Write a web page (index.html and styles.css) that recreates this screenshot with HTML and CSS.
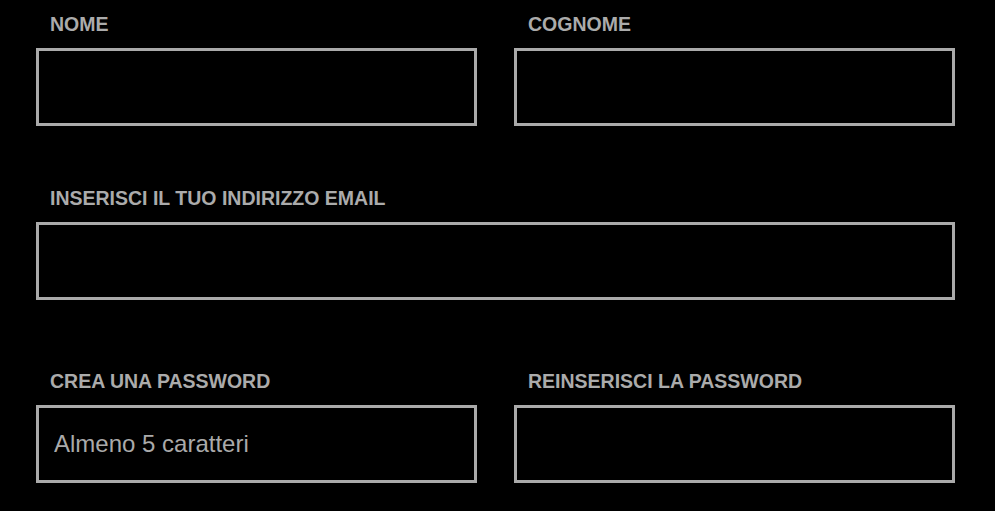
FILE: index.html
```html
<!DOCTYPE html>
<html lang="it">
<head>
<meta charset="utf-8">
<title>Registrazione</title>
<link rel="stylesheet" href="styles.css">
</head>
<body>
<form class="form">
  <div class="row row-first">
    <div class="field">
      <label class="label" for="nome">NOME</label>
      <input class="input" id="nome" type="text">
    </div>
    <div class="field">
      <label class="label" for="cognome">COGNOME</label>
      <input class="input" id="cognome" type="text">
    </div>
  </div>
  <div class="row row-email">
    <div class="field">
      <label class="label" for="email">INSERISCI IL TUO INDIRIZZO EMAIL</label>
      <input class="input" id="email" type="email">
    </div>
  </div>
  <div class="row row-pass">
    <div class="field">
      <label class="label" for="pw">CREA UNA PASSWORD</label>
      <input class="input" id="pw" type="text" placeholder="Almeno 5 caratteri">
    </div>
    <div class="field">
      <label class="label" for="pw2">REINSERISCI LA PASSWORD</label>
      <input class="input" id="pw2" type="text">
    </div>
  </div>
</form>
</body>
</html>
```

FILE: styles.css
```css
html, body {
  margin: 0;
  padding: 0;
  background: #000;
}
body {
  font-family: "Liberation Sans", Arial, sans-serif;
  color: #ababab;
}
.form {
  width: 919px;
  padding: 13px 0 0 36px;
  display: flex;
  flex-direction: column;
}
.row {
  display: flex;
  gap: 37px;
}
.row-email {
  margin-top: 61px;
}
.row-pass {
  margin-top: 70px;
}
.field {
  flex: 1;
  display: flex;
  flex-direction: column;
}
.label {
  display: block;
  font-size: 19.5px;
  line-height: 22px;
  font-weight: bold;
  padding-left: 14px;
  margin-bottom: 13px;
  color: #ababab;
}
.input {
  box-sizing: border-box;
  width: 100%;
  height: 78px;
  margin: 0;
  background: #000;
  border: 3px solid #aaaaaa;
  border-radius: 0;
  padding: 0 15px;
  font-family: "Liberation Sans", Arial, sans-serif;
  font-size: 24px;
  color: #ababab;
  outline: none;
}
.input::placeholder {
  color: #aaaaaa;
  opacity: 1;
}
```
